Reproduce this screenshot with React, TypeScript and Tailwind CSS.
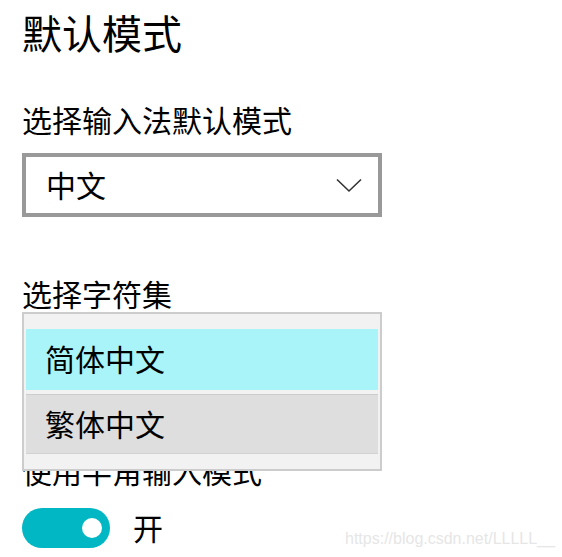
import React from 'react';

const Chevron = () => (
  <svg width="26" height="15" viewBox="0 0 26 15" fill="none">
    <path d="M1 1.5 L13 13 L25 1.5" stroke="#333" strokeWidth="1.6" />
  </svg>
);

export default function App() {
  return (
    <div className="relative w-[562px] h-[557px] overflow-hidden bg-white pl-[22px] text-black font-['Noto_Sans_CJK_SC','Noto_Sans',sans-serif]">
      {/* Heading */}
      <h1 className="pt-[12px] text-[40px] leading-[40px] font-normal">默认模式</h1>

      {/* Input mode select */}
      <div className="mt-[52px] text-[30px] leading-[30px]">选择输入法默认模式</div>
      <div className="mt-[19px] flex h-[64px] w-[360px] items-center justify-between border-4 border-[#999999] pl-[20px] pr-[16px]">
        <span className="pb-[2px] text-[30px] leading-[30px]">中文</span>
        <Chevron />
      </div>

      {/* Charset select, opened */}
      <div className="mt-[61px] text-[30px] leading-[30px]">选择字符集</div>
      <div className="relative mt-[18px]">
        <div className="flex h-[64px] w-[360px] items-center border-4 border-[#999999] pl-[20px]">
          <span className="text-[30px] leading-[30px]">简体中文</span>
        </div>
        <div className="absolute left-0 top-[-14px] z-10 flex h-[159px] w-[360px] flex-col gap-[4px] border-2 border-[#cccccc] bg-[#f2f2f2] px-[2px] py-[15px]">
          <div className="flex h-[61px] items-center bg-[#a9f4f8] pb-[3px] pl-[19px] text-[30px] leading-[30px]">简体中文</div>
          <div className="flex h-[60px] items-center bg-[#dedede] pb-[3px] pl-[19px] text-[30px] leading-[30px] shadow-[inset_0_1px_0_#cdcdcd,inset_0_-1px_0_#d2d2d2]">繁体中文</div>
        </div>
      </div>

      {/* Half-width mode */}
      <div className="mt-[65px] text-[30px] leading-[30px]">使用半角输入模式</div>
      <div className="mt-[23px] flex items-center gap-[23px]">
        <div className="flex h-[40px] w-[88px] items-center justify-end rounded-full bg-[#00b7c3] pr-[8px]">
          <div className="h-[20px] w-[20px] rounded-full bg-white" />
        </div>
        <span className="pb-[2px] text-[30px] leading-[30px]">开</span>
      </div>

      {/* Watermark */}
      <div className="absolute left-[345px] top-[531px] text-[16px] leading-[16px] text-[#e6e6e6] font-['Liberation_Sans',Arial,sans-serif]">
        https://blog.csdn.net/LLLLL__
      </div>
    </div>
  );
}
